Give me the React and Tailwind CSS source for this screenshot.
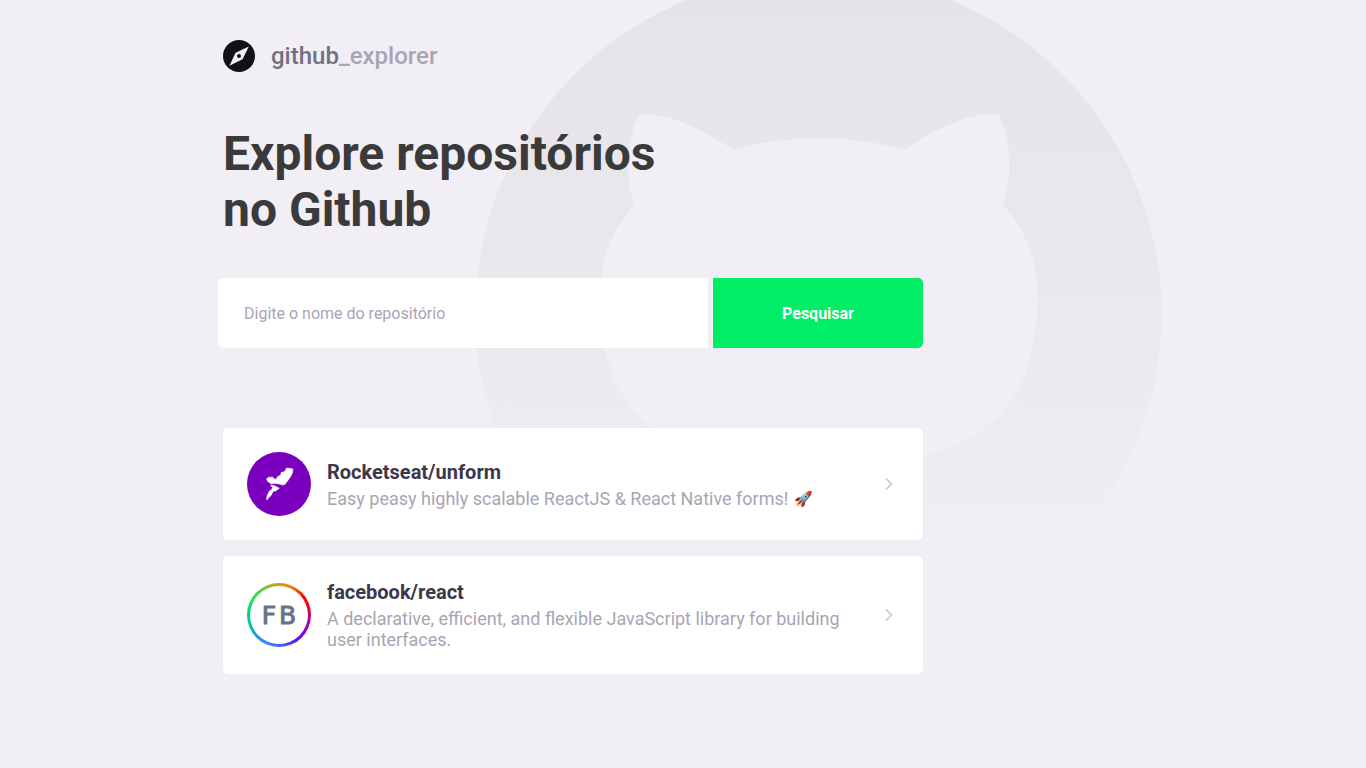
import { FiChevronRight } from "react-icons/fi";

function GithubMark() {
  return (
    <svg
      aria-hidden="true"
      viewBox="0 0 97.7 96"
      preserveAspectRatio="none"
      className="pointer-events-none absolute -top-[26px] left-[70%] -z-10 h-[663px] w-[687px] -translate-x-[70%]"
    >
      <defs>
        <linearGradient id="mark-fade" x1="0" y1="0" x2="0" y2="96" gradientUnits="userSpaceOnUse">
          <stop offset="0" stopColor="#e5e2e9" />
          <stop offset="0.34" stopColor="#e9e6ec" />
          <stop offset="0.4" stopColor="#e9e8ec" />
          <stop offset="0.46" stopColor="#eae7ee" />
          <stop offset="0.92" stopColor="#f1eef6" />
        </linearGradient>
      </defs>
      <path
        fill="url(#mark-fade)"
        fillRule="evenodd"
        d="M48.854 0C21.839 0 0 22 0 49.217c0 21.756 13.993 40.172 33.405 46.69 2.427.49 3.316-1.059 3.316-2.362 0-1.141-.08-5.052-.08-9.127-13.59 2.934-16.42-5.867-16.42-5.867-2.184-5.704-5.42-7.17-5.42-7.17-4.448-3.015.324-3.015.324-3.015 4.934.326 7.523 5.052 7.523 5.052 4.367 7.496 11.404 5.378 14.235 4.074.404-3.178 1.699-5.378 3.074-6.6-10.839-1.141-22.243-5.378-22.243-24.283 0-5.378 1.94-9.778 5.014-13.2-.485-1.222-2.184-6.275.486-13.038 0 0 4.125-1.304 13.426 5.052a46.97 46.97 0 0 1 12.214-1.63c4.125 0 8.33.571 12.213 1.63 9.302-6.356 13.427-5.052 13.427-5.052 2.67 6.763.97 11.816.485 13.038 3.155 3.422 5.015 7.822 5.015 13.2 0 18.905-11.404 23.06-22.324 24.283 1.78 1.548 3.316 4.481 3.316 9.126 0 6.6-.08 11.897-.08 13.526 0 1.304.89 2.853 3.316 2.364 19.412-6.52 33.405-24.935 33.405-46.691C97.707 22 75.788 0 48.854 0z"
      />
    </svg>
  );
}

function Logo() {
  return (
    <div className="flex items-center gap-4">
      <svg viewBox="0 0 32 32" className="size-8" aria-hidden="true">
        <circle cx="16" cy="16" r="16" fill="#121214" />
        <path d="M25.8 6.6 12.6 12.8 6.4 25.8 19.6 19.2Z" fill="#f1eef6" />
        <circle cx="16" cy="16" r="2" fill="#121214" />
      </svg>
      <span className="text-2xl leading-8 font-medium text-[#737082]">
        github<span className="text-[#a8a5b3]">_explorer</span>
      </span>
    </div>
  );
}

function RocketseatAvatar() {
  return (
    <svg viewBox="0 0 192 192" className="size-16 shrink-0" role="img" aria-label="Rocketseat">
      <circle cx="96" cy="96" r="96" fill="#7a00be" />
      <g fill="#fff" stroke="#fff" strokeWidth="2">
        <path d="M119 48L138 51L136 63L130 75L114 97L108 99L97 96L84 94L72 95L61 87L59 80L67 75L72 79L74 74L86 83L92 74L101 69L103 61L111 60L115 55Z" />
        <path d="M71 99L84 102L97 109L85 117L79 117L72 130L59 144L60 132L68 116L74 113L77 107Z" />
      </g>
    </svg>
  );
}

function FacebookAvatar() {
  return (
    <div className="size-16 shrink-0 rounded-full bg-[conic-gradient(#c8a010,#ee8000_25deg,#ff0000_55deg,#f00018_75deg,#b400a0_100deg,#8c00c8_125deg,#5a14f0_145deg,#4060ff_175deg,#3c82ff_205deg,#14a0e0_230deg,#00c8a0_255deg,#00e070_285deg,#28e060_305deg,#80c040_335deg,#c8a010)] p-[3px]">
      <div
        role="img"
        aria-label="FB"
        className="flex size-full items-center justify-center gap-[3px] rounded-full bg-white font-['DejaVu_Sans',sans-serif] text-[25px] leading-none text-[#67738a] [-webkit-text-stroke:1px_#67738a]"
      >
        <span>F</span>
        <span>B</span>
      </div>
    </div>
  );
}

const repositories = [
  {
    name: "Rocketseat/unform",
    description: "Easy peasy highly scalable ReactJS & React Native forms!",
    emoji: "🚀",
    Avatar: RocketseatAvatar,
  },
  {
    name: "facebook/react",
    description:
      "A declarative, efficient, and flexible JavaScript library for building user interfaces.",
    Avatar: FacebookAvatar,
  },
];

export default function App() {
  return (
    <div className="relative isolate min-h-screen overflow-hidden bg-[#f1eef6] font-['Roboto',sans-serif]">
      <GithubMark />
      <main className="mx-auto max-w-[960px] px-5 py-10">
        <header>
          <Logo />
        </header>
        <h1 className="mt-[54px] max-w-[450px] text-5xl leading-14 font-bold text-[#3a3a3a]">
          Explore repositórios no Github
        </h1>
        <form
          className="mt-10 -ml-[5px] flex max-w-[705px] gap-[5px]"
          onSubmit={(event) => event.preventDefault()}
        >
          <input
            type="text"
            aria-label="Nome do repositório"
            placeholder="Digite o nome do repositório"
            className="h-[70px] min-w-0 flex-1 rounded-l-[5px] bg-white px-[26px] text-base text-[#3a3a3a] outline-none placeholder:text-[#a8a5b3]"
          />
          <button
            type="submit"
            className="h-[70px] w-[210px] rounded-r-[5px] bg-[#00ee66] text-base leading-[normal] font-bold text-white"
          >
            Pesquisar
          </button>
        </form>
        <div className="mt-20 flex max-w-[700px] flex-col gap-4">
          {repositories.map(({ name, description, emoji, Avatar }) => (
            <a key={name} href="#" className="flex items-center rounded-[5px] bg-white p-6">
              <Avatar />
              <div className="mx-4 flex-1">
                <strong className="block text-xl leading-6 font-bold text-[#3d374d]">{name}</strong>
                <p className="mt-1 text-lg leading-[21px] text-[#a8a5b3]">
                  {description}
                  {emoji && <span className="ml-1.5 align-[1px] text-[15px] leading-none">{emoji}</span>}
                </p>
              </div>
              <FiChevronRight size={20} className="shrink-0 text-[#c9c6d4]" />
            </a>
          ))}
        </div>
      </main>
    </div>
  );
}
